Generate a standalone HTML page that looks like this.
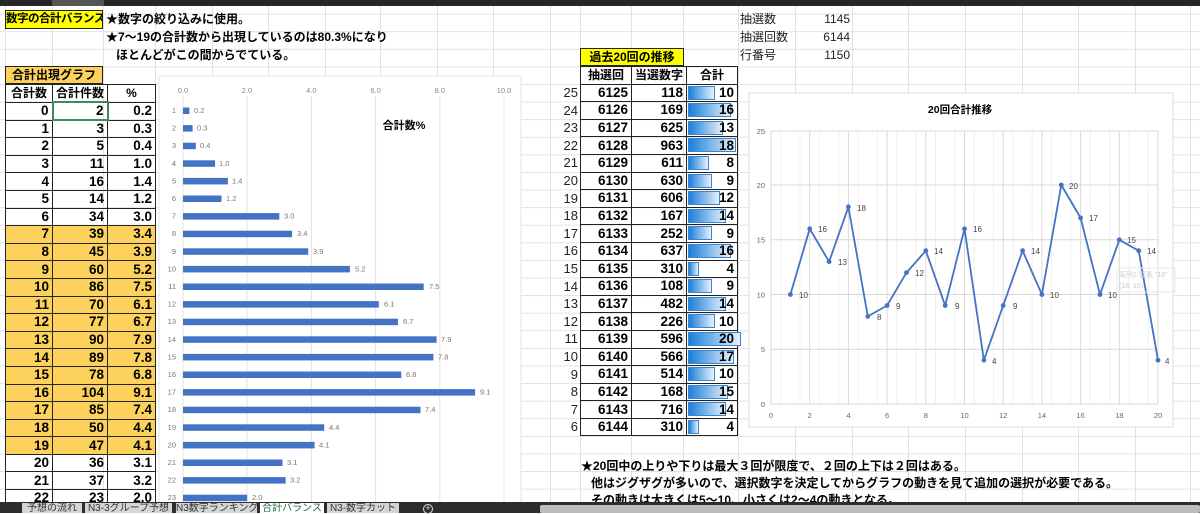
<!DOCTYPE html>
<html><head><meta charset="utf-8">
<style>
*{margin:0;padding:0;box-sizing:border-box}
body{width:1200px;height:513px;overflow:hidden;position:relative;background:#fff;font-family:"Liberation Sans","Noto Sans CJK JP",sans-serif;color:#000;
background-image:linear-gradient(#e2e2e2 1px,transparent 1px);background-size:100% 17.6px;background-position:0 13.6px}
.abs{position:absolute}
.vl{position:absolute;top:6px;width:1px;height:496px;background:#e2e2e2}
table{border-collapse:collapse;position:absolute;font-weight:bold;font-size:13.5px}
td{height:17.6px;padding:0 3px;text-align:right;line-height:16px;border:1px solid #222;white-space:nowrap}
.o td{background:#fcd15c}
.t{font-size:12px;font-weight:bold;position:absolute;white-space:nowrap}
.bar{display:block;height:14px;background:linear-gradient(90deg,#1b7fd9,#e6f1fc);border:1px solid #3b86d0;position:absolute;left:1px;top:1px}
.tab{position:absolute;top:503px;height:10px;background:#d5d5d5;color:#333;font-size:10px;line-height:12px;text-align:center;overflow:hidden;white-space:nowrap}
</style></head><body>
<div class="abs" style="left:0;top:0;width:1200px;height:6px;background:#262626"></div>
<div class="abs" style="left:52px;top:0;width:52px;height:6px;background:#555"></div>
<div class="vl" style="left:5px"></div><div class="vl" style="left:52px"></div><div class="vl" style="left:103px"></div><div class="vl" style="left:155px"></div><div class="vl" style="left:212px"></div><div class="vl" style="left:268px"></div><div class="vl" style="left:325px"></div><div class="vl" style="left:380px"></div><div class="vl" style="left:437px"></div><div class="vl" style="left:493px"></div><div class="vl" style="left:550px"></div><div class="vl" style="left:580px"></div><div class="vl" style="left:631px"></div><div class="vl" style="left:683px"></div><div class="vl" style="left:738px"></div><div class="vl" style="left:795px"></div><div class="vl" style="left:852px"></div><div class="vl" style="left:908px"></div><div class="vl" style="left:965px"></div><div class="vl" style="left:1022px"></div><div class="vl" style="left:1078px"></div><div class="vl" style="left:1135px"></div><div class="vl" style="left:1190px"></div>

<div class="abs" style="left:5px;top:10px;width:98px;height:19px;background:#ffff00;border:1px solid #222;font-size:11.5px;font-weight:bold;line-height:17px;white-space:nowrap;overflow:hidden;letter-spacing:-0.5px">数字の合計バランス</div>
<div class="t" style="left:106px;top:10px">★数字の絞り込みに使用。</div>
<div class="t" style="left:106px;top:28px">★7～19の合計数から出現しているのは80.3%になり</div>
<div class="t" style="left:116px;top:46px">ほとんどがこの間からでている。</div>

<div class="abs" style="left:5px;top:66px;width:98px;height:18px;background:#fcd15c;border:1px solid #222;font-size:12px;font-weight:bold;line-height:16px;text-align:center">合計出現グラフ</div>
<table style="left:5px;top:84px;width:151px">
<tr><td style="width:47px;text-align:center;font-size:12px">合計数</td><td style="width:51px;text-align:center;font-size:12px">合計件数</td><td style="text-align:center;font-size:12px">%</td></tr>
<tr><td>0</td><td style="border:2px solid #3e8a5c">2</td><td>0.2</td></tr>
<tr><td>1</td><td>3</td><td>0.3</td></tr>
<tr><td>2</td><td>5</td><td>0.4</td></tr>
<tr><td>3</td><td>11</td><td>1.0</td></tr>
<tr><td>4</td><td>16</td><td>1.4</td></tr>
<tr><td>5</td><td>14</td><td>1.2</td></tr>
<tr><td>6</td><td>34</td><td>3.0</td></tr>
<tr class="o"><td>7</td><td>39</td><td>3.4</td></tr>
<tr class="o"><td>8</td><td>45</td><td>3.9</td></tr>
<tr class="o"><td>9</td><td>60</td><td>5.2</td></tr>
<tr class="o"><td>10</td><td>86</td><td>7.5</td></tr>
<tr class="o"><td>11</td><td>70</td><td>6.1</td></tr>
<tr class="o"><td>12</td><td>77</td><td>6.7</td></tr>
<tr class="o"><td>13</td><td>90</td><td>7.9</td></tr>
<tr class="o"><td>14</td><td>89</td><td>7.8</td></tr>
<tr class="o"><td>15</td><td>78</td><td>6.8</td></tr>
<tr class="o"><td>16</td><td>104</td><td>9.1</td></tr>
<tr class="o"><td>17</td><td>85</td><td>7.4</td></tr>
<tr class="o"><td>18</td><td>50</td><td>4.4</td></tr>
<tr class="o"><td>19</td><td>47</td><td>4.1</td></tr>
<tr><td>20</td><td>36</td><td>3.1</td></tr>
<tr><td>21</td><td>37</td><td>3.2</td></tr>
<tr><td>22</td><td>23</td><td>2.0</td></tr>
</table>

<svg class="abs" style="left:0;top:0" width="1200" height="513" font-family="Liberation Sans, Noto Sans CJK JP, sans-serif">
<rect x="159" y="76" width="362" height="430" fill="#fff" stroke="#e6e6e6"/>
<g stroke="#e4e4e4"><line x1="183" y1="96" x2="183" y2="503"/><line x1="247" y1="96" x2="247" y2="503"/><line x1="311.4" y1="96" x2="311.4" y2="503"/><line x1="375.6" y1="96" x2="375.6" y2="503"/><line x1="439.8" y1="96" x2="439.8" y2="503"/><line x1="504" y1="96" x2="504" y2="503"/></g>
<g fill="#888" font-size="7.5" text-anchor="middle"><text x="183" y="93">0.0</text><text x="247" y="93">2.0</text><text x="311.4" y="93">4.0</text><text x="375.6" y="93">6.0</text><text x="439.8" y="93">8.0</text><text x="504" y="93">10.0</text></g>
<text x="404" y="129" font-size="11" font-weight="bold" text-anchor="middle">合計数%</text>
<g fill="#4472c4">
<rect x="183" y="107.5" width="6.4" height="6.5"/><rect x="183" y="125.1" width="9.6" height="6.5"/><rect x="183" y="142.7" width="12.8" height="6.5"/><rect x="183" y="160.3" width="32.1" height="6.5"/><rect x="183" y="177.9" width="44.9" height="6.5"/><rect x="183" y="195.5" width="38.5" height="6.5"/><rect x="183" y="213.1" width="96.3" height="6.5"/><rect x="183" y="230.7" width="109.1" height="6.5"/><rect x="183" y="248.3" width="125.2" height="6.5"/><rect x="183" y="265.9" width="166.9" height="6.5"/><rect x="183" y="283.5" width="240.7" height="6.5"/><rect x="183" y="301.1" width="195.8" height="6.5"/><rect x="183" y="318.7" width="215" height="6.5"/><rect x="183" y="336.3" width="253.6" height="6.5"/><rect x="183" y="353.9" width="250.4" height="6.5"/><rect x="183" y="371.5" width="218.3" height="6.5"/><rect x="183" y="389.1" width="292.1" height="6.5"/><rect x="183" y="406.7" width="237.5" height="6.5"/><rect x="183" y="424.3" width="141.2" height="6.5"/><rect x="183" y="441.9" width="131.6" height="6.5"/><rect x="183" y="459.5" width="99.5" height="6.5"/><rect x="183" y="477.1" width="102.7" height="6.5"/><rect x="183" y="494.7" width="64.2" height="6.5"/>
</g>
<g fill="#777" font-size="7.5">
<g text-anchor="end"><text x="176" y="113">1</text><text x="176" y="130.6">2</text><text x="176" y="148.2">3</text><text x="176" y="165.8">4</text><text x="176" y="183.4">5</text><text x="176" y="201">6</text><text x="176" y="218.6">7</text><text x="176" y="236.2">8</text><text x="176" y="253.8">9</text><text x="176" y="271.4">10</text><text x="176" y="289">11</text><text x="176" y="306.6">12</text><text x="176" y="324.2">13</text><text x="176" y="341.8">14</text><text x="176" y="359.4">15</text><text x="176" y="377">16</text><text x="176" y="394.6">17</text><text x="176" y="412.2">18</text><text x="176" y="429.8">19</text><text x="176" y="447.4">20</text><text x="176" y="465">21</text><text x="176" y="482.6">22</text><text x="176" y="500.2">23</text></g>
<text x="194" y="113">0.2</text><text x="197" y="130.6">0.3</text><text x="200" y="148.2">0.4</text><text x="219" y="165.8">1.0</text><text x="232" y="183.4">1.4</text><text x="226" y="201">1.2</text><text x="284" y="218.6">3.0</text><text x="297" y="236.2">3.4</text><text x="313" y="253.8">3.9</text><text x="355" y="271.4">5.2</text><text x="429" y="289">7.5</text><text x="384" y="306.6">6.1</text><text x="403" y="324.2">6.7</text><text x="441" y="341.8">7.9</text><text x="438" y="359.4">7.8</text><text x="406" y="377">6.8</text><text x="480" y="394.6">9.1</text><text x="425" y="412.2">7.4</text><text x="329" y="429.8">4.4</text><text x="319" y="447.4">4.1</text><text x="287" y="465">3.1</text><text x="290" y="482.6">3.2</text><text x="252" y="500.2">2.0</text>
</g>

<rect x="749" y="93" width="424" height="334" fill="#fff" stroke="#dedede"/>
<text x="960" y="113" font-size="10.5" font-weight="bold" text-anchor="middle">20回合計推移</text>
<g stroke="#f0f0f0">
<line x1="780.7" y1="131" x2="780.7" y2="404"/><line x1="800" y1="131" x2="800" y2="404"/><line x1="819.4" y1="131" x2="819.4" y2="404"/><line x1="838.7" y1="131" x2="838.7" y2="404"/><line x1="858" y1="131" x2="858" y2="404"/><line x1="877.4" y1="131" x2="877.4" y2="404"/><line x1="896.8" y1="131" x2="896.8" y2="404"/><line x1="916.1" y1="131" x2="916.1" y2="404"/><line x1="935.5" y1="131" x2="935.5" y2="404"/><line x1="954.8" y1="131" x2="954.8" y2="404"/><line x1="974.2" y1="131" x2="974.2" y2="404"/><line x1="993.5" y1="131" x2="993.5" y2="404"/><line x1="1012.9" y1="131" x2="1012.9" y2="404"/><line x1="1032.2" y1="131" x2="1032.2" y2="404"/><line x1="1051.6" y1="131" x2="1051.6" y2="404"/><line x1="1071" y1="131" x2="1071" y2="404"/><line x1="1090.3" y1="131" x2="1090.3" y2="404"/><line x1="1109.7" y1="131" x2="1109.7" y2="404"/><line x1="1129" y1="131" x2="1129" y2="404"/><line x1="1148.3" y1="131" x2="1148.3" y2="404"/>
</g>
<g stroke="#d9d9d9">
<line x1="771" y1="131" x2="1158" y2="131"/><line x1="771" y1="185" x2="1158" y2="185"/><line x1="771" y1="239.8" x2="1158" y2="239.8"/><line x1="771" y1="294.5" x2="1158" y2="294.5"/><line x1="771" y1="349.3" x2="1158" y2="349.3"/><line x1="771" y1="404" x2="1158" y2="404"/>
<line x1="771" y1="131" x2="771" y2="404"/><line x1="809.7" y1="131" x2="809.7" y2="404"/><line x1="848.4" y1="131" x2="848.4" y2="404"/><line x1="887.1" y1="131" x2="887.1" y2="404"/><line x1="925.8" y1="131" x2="925.8" y2="404"/><line x1="964.5" y1="131" x2="964.5" y2="404"/><line x1="1003.2" y1="131" x2="1003.2" y2="404"/><line x1="1041.9" y1="131" x2="1041.9" y2="404"/><line x1="1080.6" y1="131" x2="1080.6" y2="404"/><line x1="1119.3" y1="131" x2="1119.3" y2="404"/><line x1="1158" y1="131" x2="1158" y2="404"/>
</g>
<g fill="#666" font-size="7.5" text-anchor="end"><text x="765" y="134">25</text><text x="765" y="188">20</text><text x="765" y="242.5">15</text><text x="765" y="297.5">10</text><text x="765" y="352">5</text><text x="765" y="407">0</text></g>
<g fill="#666" font-size="7.5" text-anchor="middle"><text x="771" y="418">0</text><text x="809.7" y="418">2</text><text x="848.4" y="418">4</text><text x="887.1" y="418">6</text><text x="925.8" y="418">8</text><text x="964.5" y="418">10</text><text x="1003.2" y="418">12</text><text x="1041.9" y="418">14</text><text x="1080.6" y="418">16</text><text x="1119.3" y="418">18</text><text x="1158" y="418">20</text></g>
<polyline fill="none" stroke="#4472c4" stroke-width="1.8" points="790.4,294.5 809.7,228.8 829.1,261.7 848.4,206.9 867.8,316.4 887.1,305.5 906.5,272.6 925.8,250.7 945.2,305.5 964.5,228.8 983.9,360.2 1003.2,305.5 1022.6,250.7 1041.9,294.5 1061.3,185 1080.6,217.9 1100,294.5 1119.3,239.8 1138.7,250.7 1158,360.2"/>
<g fill="#4472c4"><circle cx="790.4" cy="294.5" r="2.4"/><circle cx="809.7" cy="228.8" r="2.4"/><circle cx="829.1" cy="261.7" r="2.4"/><circle cx="848.4" cy="206.9" r="2.4"/><circle cx="867.8" cy="316.4" r="2.4"/><circle cx="887.1" cy="305.5" r="2.4"/><circle cx="906.5" cy="272.6" r="2.4"/><circle cx="925.8" cy="250.7" r="2.4"/><circle cx="945.2" cy="305.5" r="2.4"/><circle cx="964.5" cy="228.8" r="2.4"/><circle cx="983.9" cy="360.2" r="2.4"/><circle cx="1003.2" cy="305.5" r="2.4"/><circle cx="1022.6" cy="250.7" r="2.4"/><circle cx="1041.9" cy="294.5" r="2.4"/><circle cx="1061.3" cy="185" r="2.4"/><circle cx="1080.6" cy="217.9" r="2.4"/><circle cx="1100" cy="294.5" r="2.4"/><circle cx="1119.3" cy="239.8" r="2.4"/><circle cx="1138.7" cy="250.7" r="2.4"/><circle cx="1158" cy="360.2" r="2.4"/></g>
<g fill="#444" font-size="8">
<text x="799" y="298">10</text><text x="818" y="232">16</text><text x="838" y="265">13</text><text x="857" y="211">18</text><text x="877" y="320">8</text><text x="896" y="309">9</text><text x="915" y="276">12</text><text x="934" y="254">14</text><text x="955" y="309">9</text><text x="973" y="232">16</text><text x="992" y="364">4</text><text x="1013" y="309">9</text><text x="1031" y="254">14</text><text x="1050" y="298">10</text><text x="1069" y="189">20</text><text x="1089" y="221">17</text><text x="1108" y="298">10</text><text x="1127" y="243">15</text><text x="1147" y="254">14</text><text x="1165" y="364">4</text>
</g>
<rect x="1117" y="268" width="58" height="24" fill="none" stroke="#e8e8e8"/>
<text x="1119" y="277" font-size="7" fill="#ccc">系列1 要素 "18"</text><text x="1119" y="288" font-size="7" fill="#ccc">(18, 15)</text>
</svg>

<div class="abs" style="left:580px;top:48px;width:104px;height:18px;background:#ffff00;border:1px solid #222;font-size:12px;font-weight:bold;line-height:16px;text-align:center">過去20回の推移</div>
<div class="abs" style="left:550px;top:84px;width:28px;font-size:13px;text-align:right;line-height:17.6px;color:#222">25<br>24<br>23<br>22<br>21<br>20<br>19<br>18<br>17<br>16<br>15<br>14<br>13<br>12<br>11<br>10<br>9<br>8<br>7<br>6</div>
<table style="left:580px;top:66px;width:158px">
<tr><td style="width:51px;text-align:center;font-size:12px">抽選回</td><td style="width:52px;text-align:center;font-size:12px">当選数字</td><td style="text-align:center;font-size:12px">合計</td></tr>
<tr><td>6125</td><td>118</td><td style="position:relative"><span class="bar" style="width:27px"></span><span style="position:relative">10</span></td></tr>
<tr><td>6126</td><td>169</td><td style="position:relative"><span class="bar" style="width:43px"></span><span style="position:relative">16</span></td></tr>
<tr><td>6127</td><td>625</td><td style="position:relative"><span class="bar" style="width:35px"></span><span style="position:relative">13</span></td></tr>
<tr><td>6128</td><td>963</td><td style="position:relative"><span class="bar" style="width:48px"></span><span style="position:relative">18</span></td></tr>
<tr><td>6129</td><td>611</td><td style="position:relative"><span class="bar" style="width:21px"></span><span style="position:relative">8</span></td></tr>
<tr><td>6130</td><td>630</td><td style="position:relative"><span class="bar" style="width:24px"></span><span style="position:relative">9</span></td></tr>
<tr><td>6131</td><td>606</td><td style="position:relative"><span class="bar" style="width:32px"></span><span style="position:relative">12</span></td></tr>
<tr><td>6132</td><td>167</td><td style="position:relative"><span class="bar" style="width:38px"></span><span style="position:relative">14</span></td></tr>
<tr><td>6133</td><td>252</td><td style="position:relative"><span class="bar" style="width:24px"></span><span style="position:relative">9</span></td></tr>
<tr><td>6134</td><td>637</td><td style="position:relative"><span class="bar" style="width:43px"></span><span style="position:relative">16</span></td></tr>
<tr><td>6135</td><td>310</td><td style="position:relative"><span class="bar" style="width:11px"></span><span style="position:relative">4</span></td></tr>
<tr><td>6136</td><td>108</td><td style="position:relative"><span class="bar" style="width:24px"></span><span style="position:relative">9</span></td></tr>
<tr><td>6137</td><td>482</td><td style="position:relative"><span class="bar" style="width:38px"></span><span style="position:relative">14</span></td></tr>
<tr><td>6138</td><td>226</td><td style="position:relative"><span class="bar" style="width:27px"></span><span style="position:relative">10</span></td></tr>
<tr><td>6139</td><td>596</td><td style="position:relative"><span class="bar" style="width:53px"></span><span style="position:relative">20</span></td></tr>
<tr><td>6140</td><td>566</td><td style="position:relative"><span class="bar" style="width:46px"></span><span style="position:relative">17</span></td></tr>
<tr><td>6141</td><td>514</td><td style="position:relative"><span class="bar" style="width:27px"></span><span style="position:relative">10</span></td></tr>
<tr><td>6142</td><td>168</td><td style="position:relative"><span class="bar" style="width:40px"></span><span style="position:relative">15</span></td></tr>
<tr><td>6143</td><td>716</td><td style="position:relative"><span class="bar" style="width:38px"></span><span style="position:relative">14</span></td></tr>
<tr><td>6144</td><td>310</td><td style="position:relative"><span class="bar" style="width:11px"></span><span style="position:relative">4</span></td></tr>
</table>

<div class="abs" style="left:740px;top:10px;font-size:12px;line-height:18px;color:#222">抽選数<br>抽選回数<br>行番号</div>
<div class="abs" style="left:800px;top:10px;width:50px;text-align:right;font-size:12px;line-height:18px;color:#222">1145<br>6144<br>1150</div>

<div class="t" style="left:581px;top:457px">★20回中の上りや下りは最大３回が限度で、２回の上下は２回はある。</div>
<div class="t" style="left:591px;top:474px">他はジグザグが多いので、選択数字を決定してからグラフの動きを見て追加の選択が必要である。</div>
<div class="t" style="left:591px;top:491px">その動きは大きくは5～10、小さくは2～4の動きとなる。</div>

<div class="abs" style="left:0;top:502px;width:1200px;height:11px;background:#2d2d2d"></div>
<div class="abs" style="left:540px;top:505px;width:660px;height:8px;background:#bdbdbd;border-radius:2px"></div>
<div class="tab" style="left:22px;width:60px">予想の流れ</div>
<div class="tab" style="left:85px;width:87px">N3-3グループ予想</div>
<div class="tab" style="left:176px;width:81px">N3数字ランキング</div>
<div class="tab" style="left:260px;width:64px;background:#fff;color:#1e6b3a">合計バランス</div>
<div class="tab" style="left:327px;width:72px">N3-数字カット</div>
<div class="abs" style="left:423px;top:504px;width:10px;height:10px;border:1.5px solid #ddd;border-radius:50%;color:#ddd;font-size:9px;line-height:7px;text-align:center">+</div>
</body></html>
